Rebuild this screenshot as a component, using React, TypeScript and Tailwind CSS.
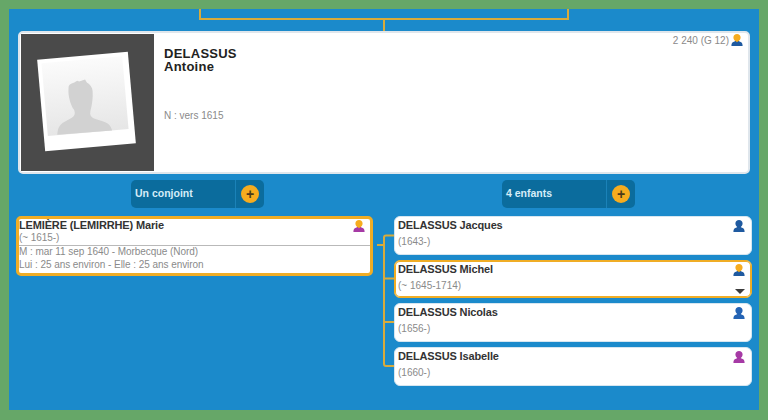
import React from 'react';

const Person: React.FC<{ head: string; body: string; className?: string }> = ({ head, body, className }) => (
  <svg viewBox="0 0 12 12" className={className ?? 'w-3 h-3'}>
    <path d="M6 0c2.100 0 3.600 1.400 3.600 3.400 0 1.500-.8 2.800-1.800 3.500v1.100H4.200V6.900C3.200 6.200 2.400 4.900 2.400 3.400 2.400 1.400 3.900 0 6 0z" fill={head} />
    <path d="M.4 12c0-2.500.8-3.700 2.500-4.200l1.700-.7L6 8.200l1.400-1.100 1.700.7c1.700.5 2.500 1.700 2.500 4.200z" fill={body} />
  </svg>
);

const AddButton: React.FC<{ label: string }> = ({ label }) => (
  <div className="w-[133px] h-[28px] rounded-[5px] bg-[#0b6c9d] flex items-center">
    <div className="flex-1 pl-[4px] text-[10.5px] font-bold text-[#d5ecf8]">{label}</div>
    <div className="w-[29px] h-full border-l border-[#1b82b8] flex items-center pl-[5px]">
      <div className="w-[18px] h-[18px] rounded-full bg-[#f6ac1f] flex items-center justify-center text-[14px] leading-none font-bold text-[#4a3a1a]">+</div>
    </div>
  </div>
);

const Child: React.FC<{ name: string; dates: string; head: string; body: string; active?: boolean; more?: boolean }> = ({ name, dates, head, body, active, more }) => (
  <div className={`h-[38.7px] rounded-[6px] bg-white border pl-[3px] pr-[6px] flex justify-between ${active ? 'border-[#f0ad25] ring-1 ring-inset ring-[#f0ad25]' : 'border-[#d6e6f0]'}`}>
    <div>
      <div className="text-[11px] leading-[14px] mt-px font-bold tracking-[-0.15px] text-[#333333]">{name}</div>
      <div className="text-[10px] leading-[12px] mt-[4px] text-[#8a8a8a]">{dates}</div>
    </div>
    <div className="flex flex-col items-center justify-between pt-[3px] pb-[3px]">
      <Person head={head} body={body} />
      {more && <div className="ml-[3px] w-0 h-0 border-x-[5px] border-x-transparent border-t-[5px] border-t-[#3c3c3c]" />}
    </div>
  </div>
);

export default function App() {
  return (
    <div className="w-[768px] h-[420px] overflow-hidden bg-[#66a768] p-[9px] pb-[10px] font-['Liberation_Sans',Arial,sans-serif]">
      <div className="h-full bg-[#1b8acb] flex flex-col items-center">
        {/* parents link */}
        <div className="w-[370px] h-[11px] shrink-0 border-x-2 border-b-2 border-[#d8ab3c]" />
        <div className="w-[2px] h-[11px] shrink-0 bg-[#d8ab3c]" />

        {/* main person */}
        <div className="w-[732px] h-[143px] shrink-0 rounded-[5px] bg-white border-2 border-[#dfe6ec] p-px flex">
          <div className="w-[133px] h-[137px] bg-[#4a4a4a] shrink-0">
            <svg viewBox="0 0 133 137" className="w-full h-full">
              <defs>
                <linearGradient id="ph" x1="0" y1="0" x2="0" y2="1">
                  <stop offset="0" stopColor="#fbfbfb" />
                  <stop offset="1" stopColor="#e6e6e6" />
                </linearGradient>
              </defs>
              <g transform="rotate(-5 65.500 67.500)">
                <rect x="20" y="21.500" width="91" height="92" fill="#ffffff" />
                <rect x="24" y="25.500" width="81" height="73" fill="url(#ph)" />
                <path d="M33.500 98c1-6 3-10 8-12l8-3.500c3-1.500 4-4 3-7.500-2-3-3.500-8-4-13-.5-4 0-8 .5-11 1-2 3-3 6-3.500l3-1.500 2 1 6-1.500 1.500 3c3 2 5 5 5 9 0 6-1.500 13-4 20-1 3.500 0 6 3 7.500l9 4c5 2 7 5 8 9.500z" fill="#d2d2d2" />
              </g>
            </svg>
          </div>
          <div className="flex-1 pl-[10px] pt-[13px] relative">
            <div className="text-[13px] leading-[13px] font-bold tracking-[0.25px] text-[#222222]">
              DELASSUS
              <br />
              Antoine
            </div>
            <div className="mt-[37px] text-[10px] leading-[12px] text-[#8a8a8a]">N : vers 1615</div>
            <div className="absolute top-[-1px] right-[4px] flex items-center gap-[2px] text-[10px] text-[#8a8a8a]">
              2 240 (G 12)
              <Person head="#f6ac1f" body="#1f5aa0" className="w-3 h-3 -mt-px" />
            </div>
          </div>
        </div>

        {/* relatives */}
        <div className="w-full flex pl-[7px] mt-[6px]">
          <div className="w-[357px] shrink-0 flex flex-col items-center">
            <div className="ml-[6px]">
              <AddButton label="Un conjoint" />
            </div>
            <div className="w-[357px] mt-[8px] h-[60px] rounded-[5px] bg-white border-[3px] border-[#f0ad25] text-[10px] leading-[13px] tracking-[-0.05px] text-[#8a8a8a]">
              <div className="h-[13px] flex justify-between pr-[5px]">
                <span className="text-[11px] leading-[13px] font-bold tracking-[-0.15px] text-[#333333]">LEMIÈRE (LEMIRRHE) Marie</span>
                <Person head="#f6ac1f" body="#a63aa5" className="w-3 h-3 mt-px" />
              </div>
              <div className="h-[14px] leading-[12px] border-b border-[#b9b9b9]">(~ 1615-)</div>
              <div className="-mt-px">M : mar 11 sep 1640 - Morbecque (Nord)</div>
              <div>Lui : 25 ans environ - Elle : 25 ans environ</div>
            </div>
          </div>

          <div className="flex-1 flex flex-col items-center min-w-0">
            <div className="ml-[5px]">
              <AddButton label="4 enfants" />
            </div>
            <div className="w-full flex mt-[8px]">
              <svg viewBox="0 0 21 170" className="w-[21px] h-[170px] shrink-0" fill="none" stroke="#d8ab3c" strokeWidth="2">
                <path d="M21 19.500h-8a2 2 0 0 0-2 2V148a2 2 0 0 0 2 2h8M11 62.500h10M11 106h10M4 29h7" />
              </svg>
              <div className="w-[358px] flex flex-col gap-[5px]">
                <Child name="DELASSUS Jacques" dates="(1643-)" head="#1f5aa0" body="#1f5aa0" />
                <Child name="DELASSUS Michel" dates="(~ 1645-1714)" head="#f6ac1f" body="#1f5aa0" active more />
                <Child name="DELASSUS Nicolas" dates="(1656-)" head="#2463b4" body="#2463b4" />
                <Child name="DELASSUS Isabelle" dates="(1660-)" head="#a63aa5" body="#a63aa5" />
              </div>
            </div>
          </div>
        </div>
      </div>
    </div>
  );
}
